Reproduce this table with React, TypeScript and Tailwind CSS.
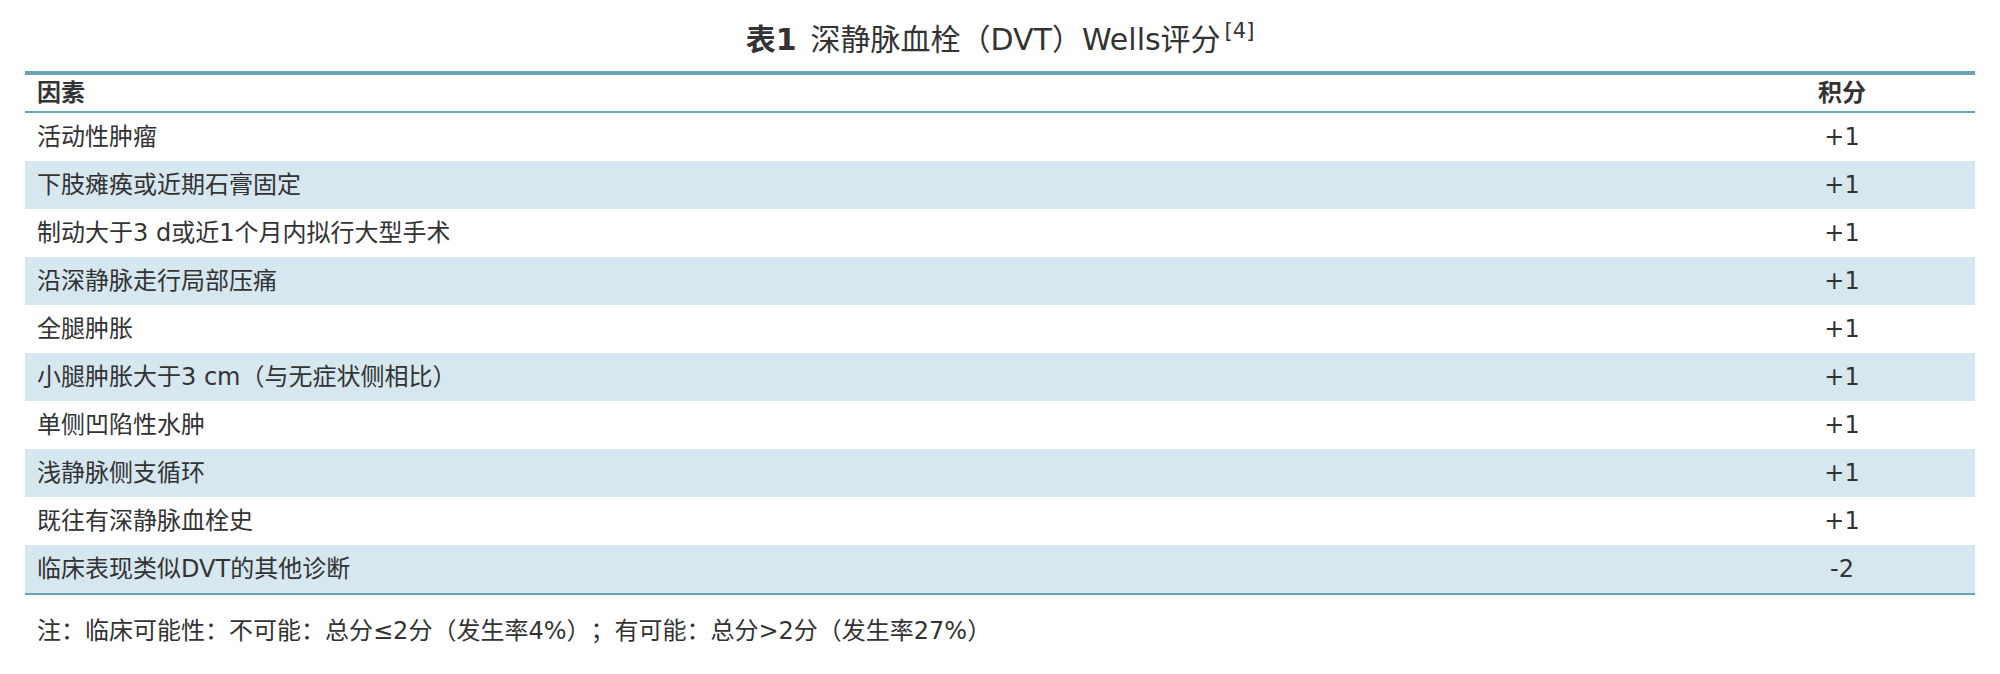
const ROWS: [string, string][] = [
  ['活动性肿瘤', '+1'],
  ['下肢瘫痪或近期石膏固定', '+1'],
  ['制动大于3 d或近1个月内拟行大型手术', '+1'],
  ['沿深静脉走行局部压痛', '+1'],
  ['全腿肿胀', '+1'],
  ['小腿肿胀大于3 cm（与无症状侧相比）', '+1'],
  ['单侧凹陷性水肿', '+1'],
  ['浅静脉侧支循环', '+1'],
  ['既往有深静脉血栓史', '+1'],
  ['临床表现类似DVT的其他诊断', '-2'],
];

export default function App() {
  return (
    <div className="w-[2000px] h-[674px] bg-white text-[#333333] font-['Verdana','DejaVu_Sans','Noto_Sans_CJK_SC',sans-serif] [text-spacing-trim:space-all]">
      {/* 表题 */}
      <div className="h-[71px] pt-[8px] flex items-center justify-center text-[30px] leading-[40px]">
        <span className="font-bold">表1</span>
        <span className="ml-[14px]">深静脉血栓（DVT）Wells评分</span>
        <span className="ml-[4px] text-[21px] leading-[24px] relative -top-[9px]">[4]</span>
      </div>

      <div className="mx-[25px] text-[24px]">
        <div className="flex items-center h-[42px] border-t-4 border-b-2 border-[#6ba3b8] font-bold">
          <div className="flex-1 px-[12px]">因素</div>
          <div className="w-[266px] text-center">积分</div>
        </div>
        {ROWS.map(([factor, score], i) => (
          <div
            key={factor}
            className={`flex items-center h-[48px] ${i % 2 === 1 ? 'bg-[#d6e7f0]' : 'bg-white'}`}
          >
            <div className="flex-1 px-[12px]">{factor}</div>
            <div className="w-[266px] text-center">{score}</div>
          </div>
        ))}
        <div className="border-b-2 border-[#6ba3b8]" />
      </div>

      <div className="mt-[20px] px-[37px] text-[24px] leading-[32px]">
        注：临床可能性：不可能：总分≤2分（发生率4%）；有可能：总分&gt;2分（发生率27%）
      </div>
    </div>
  );
}
